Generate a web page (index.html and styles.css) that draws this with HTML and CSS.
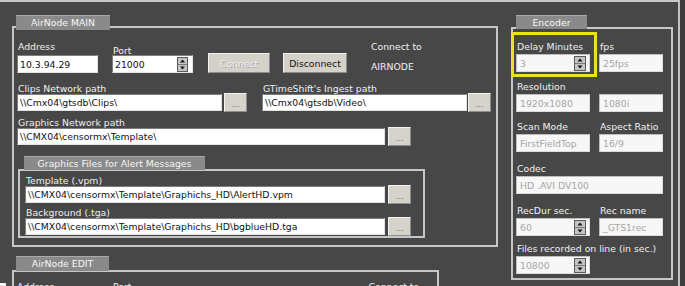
FILE: index.html
```html
<!DOCTYPE html>
<html lang="en">
<head>
  <meta charset="UTF-8" />
  <title>AirNode Settings</title>
  <link rel="stylesheet" href="styles.css">
</head>
<body>

  <div class="screen">
    <div class="col-left">

      <div class="group main">
        <div class="tab">AirNode MAIN</div>
        <div class="box main-box">
          <div class="row-connect">
            <div class="field f-address">
              <label>Address</label>
              <div class="input">10.3.94.29</div>
            </div>
            <div class="field f-port">
              <label class="low">Port</label>
              <div class="input">
                <span class="val">21000</span>
                <svg class="spinner" width="11" height="15" viewBox="0 0 11 15"><rect x="0.5" y="0.5" width="10" height="14" fill="#c4c4c4" stroke="#5c5c5c"/><line x1="1" y1="7.5" x2="10" y2="7.5" stroke="#7a7a7a"/><path d="M5.5 2.5 L8 5.5 L3 5.5 Z" fill="#111"/><path d="M3 9.5 L8 9.5 L5.5 12.5 Z" fill="#111"/></svg>
              </div>
            </div>
            <button class="btn btn-connect" disabled>Connect</button>
            <button class="btn btn-disconnect">Disconnect</button>
            <div class="connect-to">
              <div>Connect to</div>
              <div class="node">AIRNODE</div>
            </div>
          </div>

          <div class="path-row">
            <div class="path-field">
              <label>Clips Network path</label>
              <div class="path-line">
                <div class="input w-205">\\Cmx04\gtsdb\Clips\</div>
                <button class="browse">...</button>
              </div>
            </div>
            <div class="path-field gts">
              <label>GTimeShift's Ingest path</label>
              <div class="path-line">
                <div class="input w-205">\\Cmx04\gtsdb\Video\</div>
                <button class="browse near">...</button>
              </div>
            </div>
          </div>

          <div class="path-row graphics">
            <div class="path-field">
              <label>Graphics Network path</label>
              <div class="path-line">
                <div class="input w-368">\\CMX04\censormx\Template\</div>
                <button class="browse far">...</button>
              </div>
            </div>
          </div>

          <div class="group sub">
            <div class="tab">Graphics Files for Alert Messages</div>
            <div class="box sub-box">
              <div class="path-field">
                <label>Template (.vpm)</label>
                <div class="path-line">
                  <div class="input w-360">\\CMX04\censormx\Template\Graphichs_HD\AlertHD.vpm</div>
                  <button class="browse far">...</button>
                </div>
              </div>
              <div class="path-field bg">
                <label>Background (.tga)</label>
                <div class="path-line">
                  <div class="input w-360">\\CMX04\censormx\Template\Graphichs_HD\bgblueHD.tga</div>
                  <button class="browse far">...</button>
                </div>
              </div>
            </div>
          </div>
        </div>
      </div>

      <div class="group edit">
        <div class="tab">AirNode EDIT</div>
        <div class="box edit-box">
          <span class="e-address">Address</span>
          <span class="e-port">Port</span>
          <span class="e-connect">Connect to</span>
        </div>
      </div>

    </div>

    <div class="group encoder">
      <div class="tab">Encoder</div>
      <div class="box enc-box">
        <div class="highlight"></div>

        <div class="enc-row">
          <div class="enc-field c1">
            <label>Delay Minutes</label>
            <div class="input dim">
              <span class="val">3</span>
              <svg class="spinner enc" width="12" height="15" viewBox="0 0 12 15"><rect x="0.5" y="0.5" width="11" height="14" fill="#c4c4c4" stroke="#5c5c5c"/><line x1="1" y1="7.5" x2="11" y2="7.5" stroke="#7a7a7a"/><path d="M6 2.5 L8.5 5.5 L3.5 5.5 Z" fill="#111"/><path d="M3.5 9.5 L8.5 9.5 L6 12.5 Z" fill="#111"/></svg>
            </div>
          </div>
          <div class="enc-field c2">
            <label>fps</label>
            <div class="input dim">25fps</div>
          </div>
        </div>

        <div class="enc-row r2">
          <div class="enc-field c1">
            <label>Resolution</label>
            <div class="input dim">1920x1080</div>
          </div>
          <div class="enc-field c2">
            <label>&nbsp;</label>
            <div class="input dim">1080i</div>
          </div>
        </div>

        <div class="enc-row r3">
          <div class="enc-field c1">
            <label>Scan Mode</label>
            <div class="input dim">FirstFieldTop</div>
          </div>
          <div class="enc-field c2">
            <label>Aspect Ratio</label>
            <div class="input dim">16/9</div>
          </div>
        </div>

        <div class="enc-row r4">
          <div class="enc-field wide">
            <label>Codec</label>
            <div class="input dim">HD .AVI DV100</div>
          </div>
        </div>

        <div class="enc-row r5">
          <div class="enc-field c1">
            <label>RecDur sec.</label>
            <div class="input dim">
              <span class="val">60</span>
              <svg class="spinner enc" width="12" height="15" viewBox="0 0 12 15"><rect x="0.5" y="0.5" width="11" height="14" fill="#c4c4c4" stroke="#5c5c5c"/><line x1="1" y1="7.5" x2="11" y2="7.5" stroke="#7a7a7a"/><path d="M6 2.5 L8.5 5.5 L3.5 5.5 Z" fill="#111"/><path d="M3.5 9.5 L8.5 9.5 L6 12.5 Z" fill="#111"/></svg>
            </div>
          </div>
          <div class="enc-field c2">
            <label>Rec name</label>
            <div class="input dim">_GTS1rec</div>
          </div>
        </div>

        <div class="enc-row r6">
          <div class="enc-field c1">
            <label class="nowrap">Files recorded on line (in sec.)</label>
            <div class="input dim">
              <span class="val">10800</span>
              <svg class="spinner enc" width="12" height="15" viewBox="0 0 12 15"><rect x="0.5" y="0.5" width="11" height="14" fill="#c4c4c4" stroke="#5c5c5c"/><line x1="1" y1="7.5" x2="11" y2="7.5" stroke="#7a7a7a"/><path d="M6 2.5 L8.5 5.5 L3.5 5.5 Z" fill="#111"/><path d="M3.5 9.5 L8.5 9.5 L6 12.5 Z" fill="#111"/></svg>
            </div>
          </div>
        </div>
      </div>
    </div>
  </div>

  <div class="corner"></div>

</body>
</html>
```

FILE: styles.css
```css
body {
  margin: 0;
  width: 685px;
  height: 286px;
  overflow: hidden;
  background: #3f3f3f;
  font-family: "DejaVu Sans", Verdana, sans-serif;
  font-size: 9.3px;
  color: #f0f0f0;
}

.screen {
  box-sizing: border-box;
  width: 680px;
  height: 286px;
  border-top: 2px solid #c9c9c9;
  border-right: 2px solid #c2c2c2;
  background: #474747;
  padding: 13px 0 0 12px;
  display: flex;
  align-items: flex-start;
}

.col-left {
  width: 486px;
  flex-shrink: 0;
}

/* group boxes */

.tab {
  position: relative;
  z-index: 1;
  box-sizing: border-box;
  background: #8a8a8a;
  border-top: 1px solid #a9a9a9;
  color: #f6f6f6;
  text-align: center;
  white-space: nowrap;
}

.box {
  box-sizing: border-box;
  border: 2px solid #c6c6c6;
}

.main .tab {
  margin-left: 4px;
  width: 94px;
  height: 15px;
  line-height: 14px;
}

.main-box {
  margin-top: -4px;
  height: 221px;
  padding: 13px 0 0 3px;
}

label {
  display: block;
  height: 12px;
  line-height: 12px;
  padding-left: 1px;
  white-space: nowrap;
}

.input {
  box-sizing: border-box;
  display: flex;
  align-items: center;
  background: #fff;
  color: #111;
  border: 1px solid;
  border-color: #7e7e7e #e2e2e2 #e2e2e2 #7e7e7e;
  padding: 0 2px;
  white-space: nowrap;
  overflow: hidden;
}

.input .val {
  flex: 1;
}

.spinner {
  flex-shrink: 0;
  margin-right: 4px;
}

.spinner.enc {
  margin-right: 1px;
}

/* connect row */

.row-connect {
  display: flex;
  align-items: flex-start;
  height: 32px;
}

.field .input {
  height: 18px;
}

.f-address {
  width: 81px;
}

.f-address label {
  margin-bottom: 2px;
}

.f-port {
  width: 81px;
  margin-left: 14px;
}

.f-port label {
  margin-top: 4px;
  margin-bottom: -2px;
}

.f-port .input {
  padding-right: 0;
}

.btn {
  font: inherit;
  padding: 0;
  margin-top: 12px;
  height: 20px;
  background: #d4d1cb;
  border: 1px solid;
  border-color: #f2f2f2 #8c8c8c #8c8c8c #f2f2f2;
}

.btn-connect {
  width: 62px;
  margin-left: 15px;
  color: #efefef;
  text-shadow: 1px 1px 0 #a9a9a9;
}

.btn-disconnect {
  width: 64px;
  margin-left: 13px;
  color: #111;
}

.connect-to {
  margin-left: 24px;
  line-height: 12px;
}

.connect-to .node {
  margin-top: 8px;
}

/* path rows */

.path-row {
  display: flex;
  margin-top: 10px;
}

.path-row.graphics {
  margin-top: 5px;
}

.path-field label {
  margin-bottom: -2px;
}

.path-field.gts {
  margin-left: 15px;
}

.path-line {
  display: flex;
  align-items: center;
  height: 19px;
}

.path-line .input {
  height: 17px;
}

.w-205 { width: 205px; }
.w-368 { width: 368px; }
.w-360 { width: 360px; }

.browse {
  width: 23px;
  height: 19px;
  margin-left: 2px;
  padding: 3px 0 0;
  font-family: inherit;
  font-size: 8px;
  color: #6a6a6a;
  background: #d6d3cd;
  border: 1px solid;
  border-color: #f2f2f2 #8e8e8e #8e8e8e #f2f2f2;
}

.browse.near { margin-left: 1px; }
.browse.far { margin-left: 3px; }

/* alert graphics sub group */

.sub {
  margin: 10px 0 0 1px;
}

.sub .tab {
  margin-left: 6px;
  width: 181px;
  height: 14px;
  line-height: 13px;
}

.sub-box {
  margin-top: -1px;
  width: 407px;
  height: 69px;
  padding: 4px 0 0 5px;
}

.path-field.bg {
  margin-top: 3px;
}

/* edit group, cut off at the bottom */

.edit {
  margin-top: 9px;
}

.edit .tab {
  margin-left: 4px;
  width: 93px;
  height: 15px;
  line-height: 14px;
}

.edit-box {
  margin-top: -1px;
  width: 427px;
  height: 40px;
  padding: 9px 0 0 3px;
  display: flex;
  line-height: 12px;
}

.e-port { margin-left: 59px; }
.e-connect { margin-left: 237px; }

/* encoder */

.encoder {
  margin-left: 13px;
}

.encoder .tab {
  margin-left: 5px;
  width: 71px;
  height: 14px;
  line-height: 13px;
}

.enc-box {
  position: relative;
  margin-top: -2px;
  width: 162px;
  height: 253px;
  padding: 12px 0 0 3px;
}

.highlight {
  position: absolute;
  left: -2px;
  top: 3px;
  width: 86px;
  height: 45px;
  box-sizing: border-box;
  border: 3px solid #e9e21c;
}

.enc-row {
  display: flex;
  gap: 9px;
}

.enc-row.r2 { margin-top: 9px; }
.enc-row.r3 { margin-top: 9px; }
.enc-row.r4 { margin-top: 11px; }
.enc-row.r5 { margin-top: 11px; }
.enc-row.r6 { margin-top: 7px; }

.enc-field label {
  margin-bottom: 1px;
}

.enc-field .input {
  height: 18px;
}

.enc-field.c1 { width: 74px; }
.enc-field.c2 { width: 64px; }
.enc-field.wide { width: 147px; }

.input.dim {
  background: #f7f7f7;
  color: #a6a6a6;
  border-color: #bdbdbd #dcdcdc #dcdcdc #bdbdbd;
  padding-left: 3px;
}

.corner {
  position: absolute;
  left: 0;
  top: 283px;
  width: 6px;
  height: 3px;
  background: #f4f4f4;
}
```
